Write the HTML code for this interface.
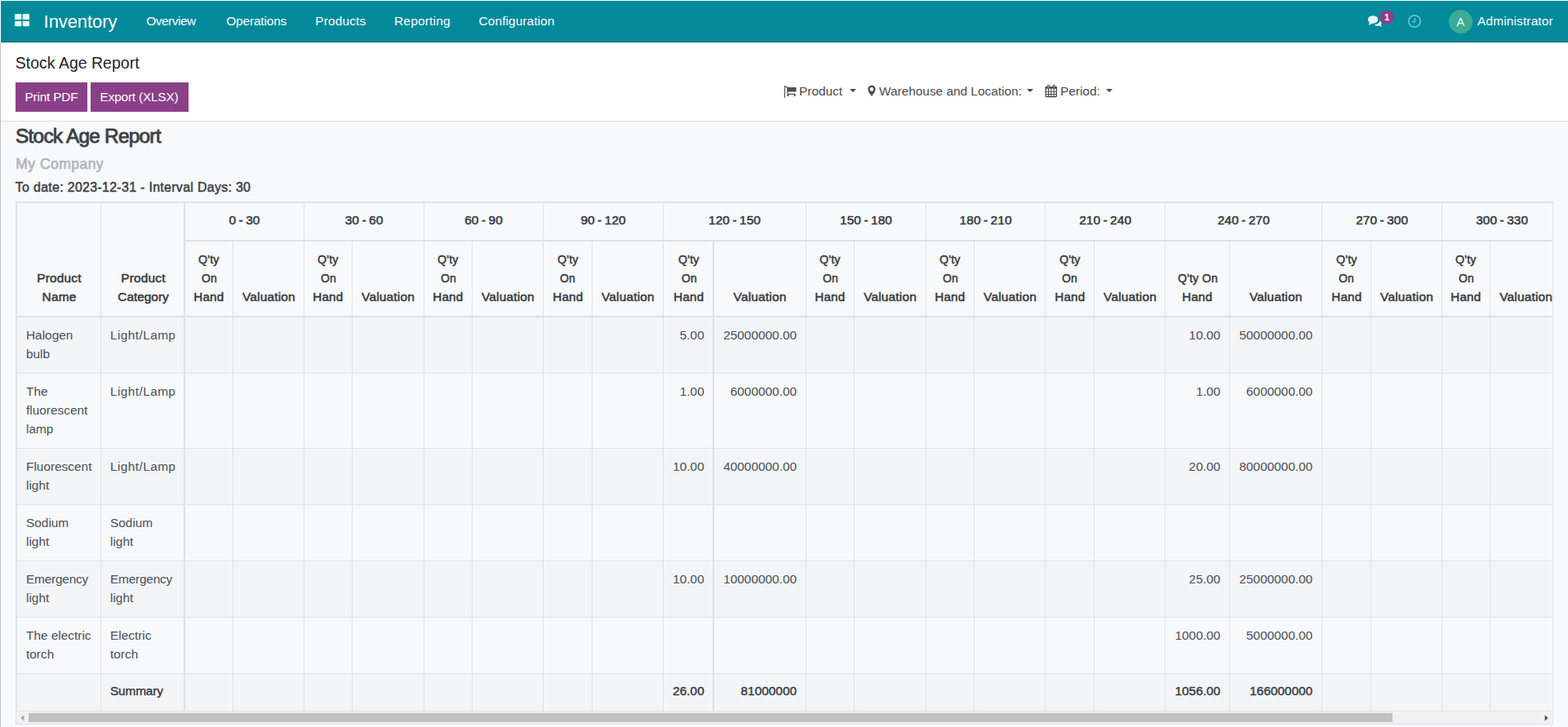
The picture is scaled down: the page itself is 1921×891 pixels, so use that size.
<!DOCTYPE html><html lang="en"><head><meta charset="utf-8"><title>Stock Age Report - Inventory</title><style>
*{box-sizing:border-box}
html,body{margin:0;padding:0}
body{width:1921px;height:891px;overflow:hidden;background:#fff;font-family:"Liberation Sans", sans-serif;font-size:15.4px;line-height:23px;color:#495057;position:relative}
.abs{position:absolute;white-space:nowrap}
#edge{position:absolute;left:0;top:52px;width:1px;height:839px;background:#c2c2c2}
#nav{position:absolute;left:1px;top:1px;width:1920px;height:51px;background:#028a9b;border-bottom:1px solid #015e6b;color:#fff}
#nav .abs{color:#fff}
.brand{font-size:22px;left:52.6px;top:13.5px;line-height:24px;letter-spacing:-0.08px}
.mi{font-size:15.4px;top:13px;line-height:24px}
#cp{position:absolute;left:1px;top:52px;width:1920px;height:97px;background:#fff;border-bottom:1px solid #dcdee1}
.title{font-size:19.5px;color:#212529;left:17.8px;top:13px;line-height:24px;letter-spacing:0px}
.btn{position:absolute;top:49px;height:36px;background:#8a4089;color:#fff;font-size:15.4px;line-height:36px;text-align:center;white-space:nowrap;letter-spacing:-0.2px}
.flt{font-size:15.4px;color:#4c4c4c;top:48px;line-height:24px}
.caret{position:absolute;width:0;height:0;border-left:4.3px solid transparent;border-right:4.3px solid transparent;border-top:4.3px solid #464a50;top:56.8px}
#content{position:absolute;left:1px;top:149px;width:1920px;height:742px;background:#f8f9fa}
h2,h4,h5{margin:0;position:absolute;white-space:nowrap;font-weight:500}
h2{left:18.1px;top:3.2px;font-size:24.4px;line-height:30px;color:#3a4149;letter-spacing:-0.76px;-webkit-text-stroke:0.85px #3a4149}
h4{left:18.3px;top:40px;font-size:17.5px;line-height:24px;color:#adb5bd;letter-spacing:0.47px;-webkit-text-stroke:0.6px #adb5bd}
h5{left:17.8px;top:68.6px;font-size:15.9px;line-height:24px;color:#3a4149;letter-spacing:0.33px;-webkit-text-stroke:0.5px #3a4149}
#wrap{position:absolute;left:18px;top:98px;width:1884px;height:641px;border:1px solid #dfe2e6;overflow:hidden;background:#f8f9fa}
table{border-collapse:separate;border-spacing:0;table-layout:fixed;position:absolute;left:0;top:0;border-top:1px solid #dfe2e6;border-left:1px solid #dfe2e6}
th,td{padding:0 11px;border-right:1px solid #dfe2e5;border-bottom:1px solid #dfe2e5;vertical-align:top;overflow:hidden;white-space:nowrap}
th{font-weight:500;color:#343a40;text-align:center;vertical-align:bottom;letter-spacing:0.2px;font-size:15.4px;-webkit-text-stroke:0.5px #343a40}
thead th{border-bottom:2px solid #dee2e6}
.q,.o,.hd{display:inline-block}
.q{transform:scaleX(.925)}
.o{transform:scaleX(.905)}
.hd{transform:scaleX(.985)}
td{padding-top:10px}
td.n{text-align:right}
tr.s td{background:#f4f5f7}
tr.sum td{font-weight:500;color:#343a40;-webkit-text-stroke:0.4px #343a40;padding-top:9.4px}
.b2{border-right-width:2px}
td.n.b2{padding-right:10.3px}
#sb{position:absolute;left:0;top:624px;width:1882px;height:15px;background:#f1f1f1}
#thumb{position:absolute;left:15px;top:2px;width:1671px;height:11px;background:#c1c1c1}
</style></head><body>
<div id="edge"></div>
<div id="nav">
<svg class="abs" style="left:17.2px;top:16px" width="18" height="16" viewBox="0 0 18 16"><g fill="#e6fbfd"><rect x="0" y="0.1" width="8.3" height="7" rx="1.2"/><rect x="9.7" y="0.1" width="8.3" height="7" rx="1.2"/><rect x="0" y="8.7" width="8.3" height="6.5" rx="1.2"/><rect x="9.7" y="8.7" width="8.3" height="6.5" rx="1.2"/></g></svg>
<div class="abs brand">Inventory</div>
<div class="abs mi" style="left:178.2px;letter-spacing:-0.46px">Overview</div>
<div class="abs mi" style="left:276.3px;letter-spacing:-0.15px">Operations</div>
<div class="abs mi" style="left:385.2px;letter-spacing:0.19px">Products</div>
<div class="abs mi" style="left:482px;letter-spacing:0.23px">Reporting</div>
<div class="abs mi" style="left:585.6px;letter-spacing:0.1px">Configuration</div>
<svg class="abs" style="left:1674px;top:18px" width="19" height="14" viewBox="0 0 22 17"><g fill="#e4f5f7"><ellipse cx="8" cy="6" rx="7.6" ry="5.8"/><path d="M3 9.5 L1.5 14.5 L8 11.5 Z"/><path d="M10 13 C14.5 13.8 18 11.5 18.3 8 C20.8 9 21.6 12 19.8 14 L21.3 17 L17 15.3 C14 16 11.2 15 10 13 Z"/></g></svg>
<div class="abs" style="left:1689px;top:12px;width:18px;height:16px;border-radius:8px;background:#8f3f8c;font-size:11px;line-height:16px;text-align:center;font-weight:bold;color:#fff">1</div>
<svg class="abs" style="left:1722.7px;top:15.6px" width="18" height="18" viewBox="0 0 18 18"><circle cx="9" cy="9" r="7.2" fill="none" stroke="#63c3cf" stroke-width="1.8"/><path d="M9.4 5v4.8H6" fill="none" stroke="#63c3cf" stroke-width="1.5"/></svg>
<div class="abs" style="left:1774px;top:11px;width:29px;height:29px;border-radius:14.5px;background:#3dab96;font-size:14.8px;line-height:31px;text-align:center;color:#f0fffc">A</div>
<div class="abs mi" style="left:1809.1px;letter-spacing:0.155px">Administrator</div>
</div>
<div id="cp">
<div class="abs title">Stock Age Report</div>
<div class="btn" style="left:18px;width:88px">Print PDF</div>
<div class="btn" style="left:110px;width:120px;text-indent:-1px">Export (XLSX)</div>
<svg class="abs" style="left:958px;top:52px" width="18" height="17" viewBox="0 0 18 17"><g stroke="#4c4c4c" fill="none"><path d="M2.5 1V16" stroke-width="1.1"/><path d="M2.5 2L5.4 2.7L6.3 13.6" stroke-width="1.2"/><path d="M6.3 11.4H14.8V13" stroke-width="1.2"/></g><g fill="#4a4f5c"><rect x="6" y="3" width="10.5" height="5.6" rx="0.6"/><rect x="5.4" y="12" width="1.9" height="1.9"/><rect x="13.6" y="12" width="1.9" height="1.9"/></g></svg>
<div class="abs flt" style="left:978px">Product</div><div class="caret" style="left:1040.2px"></div>
<svg class="abs" style="left:1062px;top:52px" width="10" height="16" viewBox="0 0 10 16"><path d="M4.95 0.8C2.2 0.8 0.3 2.8 0.3 5.4c0 2.4 2.6 5.2 4.65 8.7 2.05-3.5 4.65-6.3 4.65-8.7C9.6 2.8 7.7 0.8 4.95 0.8z M4.95 3.1a2.4 2.4 0 1 1 0 4.8A2.4 2.4 0 0 1 4.95 3.1z" fill="#45494f" fill-rule="evenodd"/></svg>
<div class="abs flt" style="left:1076px">Warehouse and Location:</div><div class="caret" style="left:1257.1px"></div>
<svg class="abs" style="left:1279px;top:51px" width="16" height="17" viewBox="0 0 16 17"><rect x="1.2" y="3.9" width="13.1" height="11.6" rx="0.8" fill="none" stroke="#4a4a4a" stroke-width="1.3"/><rect x="0.6" y="3.3" width="14.3" height="2.4" fill="#4a4a4a"/><path d="M1 9.3h13.5M1 12.5h13.5M4.5 5.5v10M7.8 5.5v10M11.1 5.5v10" stroke="#4a4a4a" stroke-width="1" fill="none"/><rect x="3.2" y="1.2" width="2.4" height="3.8" rx="0.9" fill="#aaa" stroke="#4a4a4a" stroke-width="0.9"/><rect x="10" y="1.2" width="2.4" height="3.8" rx="0.9" fill="#aaa" stroke="#4a4a4a" stroke-width="0.9"/></svg>
<div class="abs flt" style="left:1298px">Period:</div><div class="caret" style="left:1353.5px"></div>
</div>
<div id="content">
<h2>Stock Age Report</h2><h4>My Company</h4><h5>To date: 2023-12-31 - Interval Days: 30</h5>
<div id="wrap"><table style="width:1894px">
<colgroup><col style="width:103px"><col style="width:103px"><col style="width:59px"><col style="width:87px"><col style="width:59px"><col style="width:88px"><col style="width:59px"><col style="width:87px"><col style="width:60px"><col style="width:87px"><col style="width:62px"><col style="width:113px"><col style="width:59px"><col style="width:88px"><col style="width:59px"><col style="width:87px"><col style="width:60px"><col style="width:87px"><col style="width:79px"><col style="width:113px"><col style="width:60px"><col style="width:87px"><col style="width:59px"><col style="width:88px"></colgroup>
<thead><tr style="height:47px">
<th rowspan="2" style="padding:0 10px 12.5px 11px">Product<br>Name</th><th rowspan="2" class="b2" style="padding:0 9px 12.5px 11px">Product<br><span style="letter-spacing:0">Category</span></th>
<th colspan="2" style="padding-top:9.3px;vertical-align:top;letter-spacing:0.08px;word-spacing:-0.92px">0 - 30</th>
<th colspan="2" style="padding-top:9.3px;vertical-align:top;letter-spacing:0.08px;word-spacing:-0.92px">30 - 60</th>
<th colspan="2" style="padding-top:9.3px;vertical-align:top;letter-spacing:0.08px;word-spacing:-0.92px">60 - 90</th>
<th colspan="2" style="padding-top:9.3px;vertical-align:top;letter-spacing:0.08px;word-spacing:-0.92px">90 - 120</th>
<th colspan="2" style="padding-top:9.3px;vertical-align:top;letter-spacing:0.08px;word-spacing:-0.92px">120 - 150</th>
<th colspan="2" style="padding-top:9.3px;vertical-align:top;letter-spacing:0.08px;word-spacing:-0.92px">150 - 180</th>
<th colspan="2" style="padding-top:9.3px;vertical-align:top;letter-spacing:0.08px;word-spacing:-0.92px">180 - 210</th>
<th colspan="2" style="padding-top:9.3px;vertical-align:top;letter-spacing:0.08px;word-spacing:-0.92px">210 - 240</th>
<th colspan="2" style="padding-top:9.3px;vertical-align:top;letter-spacing:0.08px;word-spacing:-0.92px">240 - 270</th>
<th colspan="2" style="padding-top:9.3px;vertical-align:top;letter-spacing:0.08px;word-spacing:-0.92px">270 - 300</th>
<th colspan="2" style="padding-top:9.3px;vertical-align:top;letter-spacing:0.08px;word-spacing:-0.92px">300 - 330</th>
</tr><tr style="height:93px">
<th style="padding:0 0 12.5px 0"><span class="q">Q'ty</span><br><span class="o">On</span><br><span class="hd">Hand</span></th><th style="padding-bottom:12.5px">Valuation</th>
<th style="padding:0 0 12.5px 0"><span class="q">Q'ty</span><br><span class="o">On</span><br><span class="hd">Hand</span></th><th style="padding-bottom:12.5px">Valuation</th>
<th style="padding:0 0 12.5px 0"><span class="q">Q'ty</span><br><span class="o">On</span><br><span class="hd">Hand</span></th><th style="padding-bottom:12.5px">Valuation</th>
<th style="padding:0 0 12.5px 0"><span class="q">Q'ty</span><br><span class="o">On</span><br><span class="hd">Hand</span></th><th style="padding-bottom:12.5px">Valuation</th>
<th class="b2" style="padding:0 0 12.5px 2px"><span class="q">Q'ty</span><br><span class="o">On</span><br><span class="hd">Hand</span></th><th style="padding-bottom:12.5px">Valuation</th>
<th style="padding:0 0 12.5px 0"><span class="q">Q'ty</span><br><span class="o">On</span><br><span class="hd">Hand</span></th><th style="padding-bottom:12.5px">Valuation</th>
<th style="padding:0 0 12.5px 0"><span class="q">Q'ty</span><br><span class="o">On</span><br><span class="hd">Hand</span></th><th style="padding-bottom:12.5px">Valuation</th>
<th style="padding:0 0 12.5px 0"><span class="q">Q'ty</span><br><span class="o">On</span><br><span class="hd">Hand</span></th><th style="padding-bottom:12.5px">Valuation</th>
<th style="padding:0 0 12.5px 0"><span class="q" style="transform:scaleX(.92)">Q'ty On</span><br><span class="hd">Hand</span></th><th style="padding-bottom:12.5px">Valuation</th>
<th style="padding:0 0 12.5px 0"><span class="q">Q'ty</span><br><span class="o">On</span><br><span class="hd">Hand</span></th><th style="padding-bottom:12.5px">Valuation</th>
<th style="padding:0 0 12.5px 0"><span class="q">Q'ty</span><br><span class="o">On</span><br><span class="hd">Hand</span></th><th style="padding-bottom:12.5px">Valuation</th>
</tr></thead><tbody>
<tr class="s" style="height:69px"><td>Halogen<br>bulb</td><td class="b2"><span style="letter-spacing:0.42px">Light/Lamp</span></td>
<td class="n"></td><td class="n"></td>
<td class="n"></td><td class="n"></td>
<td class="n"></td><td class="n"></td>
<td class="n"></td><td class="n"></td>
<td class="n b2">5.00</td><td class="n">25000000.00</td>
<td class="n"></td><td class="n"></td>
<td class="n"></td><td class="n"></td>
<td class="n"></td><td class="n"></td>
<td class="n">10.00</td><td class="n">50000000.00</td>
<td class="n"></td><td class="n"></td>
<td class="n"></td><td class="n"></td>
</tr>
<tr style="height:92px"><td>The<br>fluorescent<br>lamp</td><td class="b2"><span style="letter-spacing:0.42px">Light/Lamp</span></td>
<td class="n"></td><td class="n"></td>
<td class="n"></td><td class="n"></td>
<td class="n"></td><td class="n"></td>
<td class="n"></td><td class="n"></td>
<td class="n b2">1.00</td><td class="n">6000000.00</td>
<td class="n"></td><td class="n"></td>
<td class="n"></td><td class="n"></td>
<td class="n"></td><td class="n"></td>
<td class="n">1.00</td><td class="n">6000000.00</td>
<td class="n"></td><td class="n"></td>
<td class="n"></td><td class="n"></td>
</tr>
<tr class="s" style="height:69px"><td>Fluorescent<br>light</td><td class="b2"><span style="letter-spacing:0.42px">Light/Lamp</span></td>
<td class="n"></td><td class="n"></td>
<td class="n"></td><td class="n"></td>
<td class="n"></td><td class="n"></td>
<td class="n"></td><td class="n"></td>
<td class="n b2">10.00</td><td class="n">40000000.00</td>
<td class="n"></td><td class="n"></td>
<td class="n"></td><td class="n"></td>
<td class="n"></td><td class="n"></td>
<td class="n">20.00</td><td class="n">80000000.00</td>
<td class="n"></td><td class="n"></td>
<td class="n"></td><td class="n"></td>
</tr>
<tr style="height:69px"><td>Sodium<br>light</td><td class="b2">Sodium<br>light</td>
<td class="n"></td><td class="n"></td>
<td class="n"></td><td class="n"></td>
<td class="n"></td><td class="n"></td>
<td class="n"></td><td class="n"></td>
<td class="n b2"></td><td class="n"></td>
<td class="n"></td><td class="n"></td>
<td class="n"></td><td class="n"></td>
<td class="n"></td><td class="n"></td>
<td class="n"></td><td class="n"></td>
<td class="n"></td><td class="n"></td>
<td class="n"></td><td class="n"></td>
</tr>
<tr class="s" style="height:69px"><td><span style="letter-spacing:-0.2px">Emergency</span><br>light</td><td class="b2"><span style="letter-spacing:-0.2px">Emergency</span><br>light</td>
<td class="n"></td><td class="n"></td>
<td class="n"></td><td class="n"></td>
<td class="n"></td><td class="n"></td>
<td class="n"></td><td class="n"></td>
<td class="n b2">10.00</td><td class="n">10000000.00</td>
<td class="n"></td><td class="n"></td>
<td class="n"></td><td class="n"></td>
<td class="n"></td><td class="n"></td>
<td class="n">25.00</td><td class="n">25000000.00</td>
<td class="n"></td><td class="n"></td>
<td class="n"></td><td class="n"></td>
</tr>
<tr style="height:69px"><td>The electric<br>torch</td><td class="b2">Electric<br>torch</td>
<td class="n"></td><td class="n"></td>
<td class="n"></td><td class="n"></td>
<td class="n"></td><td class="n"></td>
<td class="n"></td><td class="n"></td>
<td class="n b2"></td><td class="n"></td>
<td class="n"></td><td class="n"></td>
<td class="n"></td><td class="n"></td>
<td class="n"></td><td class="n"></td>
<td class="n">1000.00</td><td class="n">5000000.00</td>
<td class="n"></td><td class="n"></td>
<td class="n"></td><td class="n"></td>
</tr>
<tr class="s sum" style="height:46px"><td></td><td class="b2" style="letter-spacing:-0.15px">Summary</td>
<td class="n"></td><td class="n"></td>
<td class="n"></td><td class="n"></td>
<td class="n"></td><td class="n"></td>
<td class="n"></td><td class="n"></td>
<td class="n b2">26.00</td><td class="n">81000000</td>
<td class="n"></td><td class="n"></td>
<td class="n"></td><td class="n"></td>
<td class="n"></td><td class="n"></td>
<td class="n">1056.00</td><td class="n">166000000</td>
<td class="n"></td><td class="n"></td>
<td class="n"></td><td class="n"></td>
</tr></tbody></table>
<div id="sb"><svg class="abs" style="left:4.6px;top:3.6px" width="5" height="8" viewBox="0 0 5 8"><path d="M4.4 0.2v7.6L0.4 4z" fill="#a3a3a3"/></svg><div id="thumb"></div><svg class="abs" style="left:1872px;top:3.6px" width="5" height="8" viewBox="0 0 5 8"><path d="M0.6 0.2v7.6L4.6 4z" fill="#505050"/></svg></div>
</div></div>
</body></html>
